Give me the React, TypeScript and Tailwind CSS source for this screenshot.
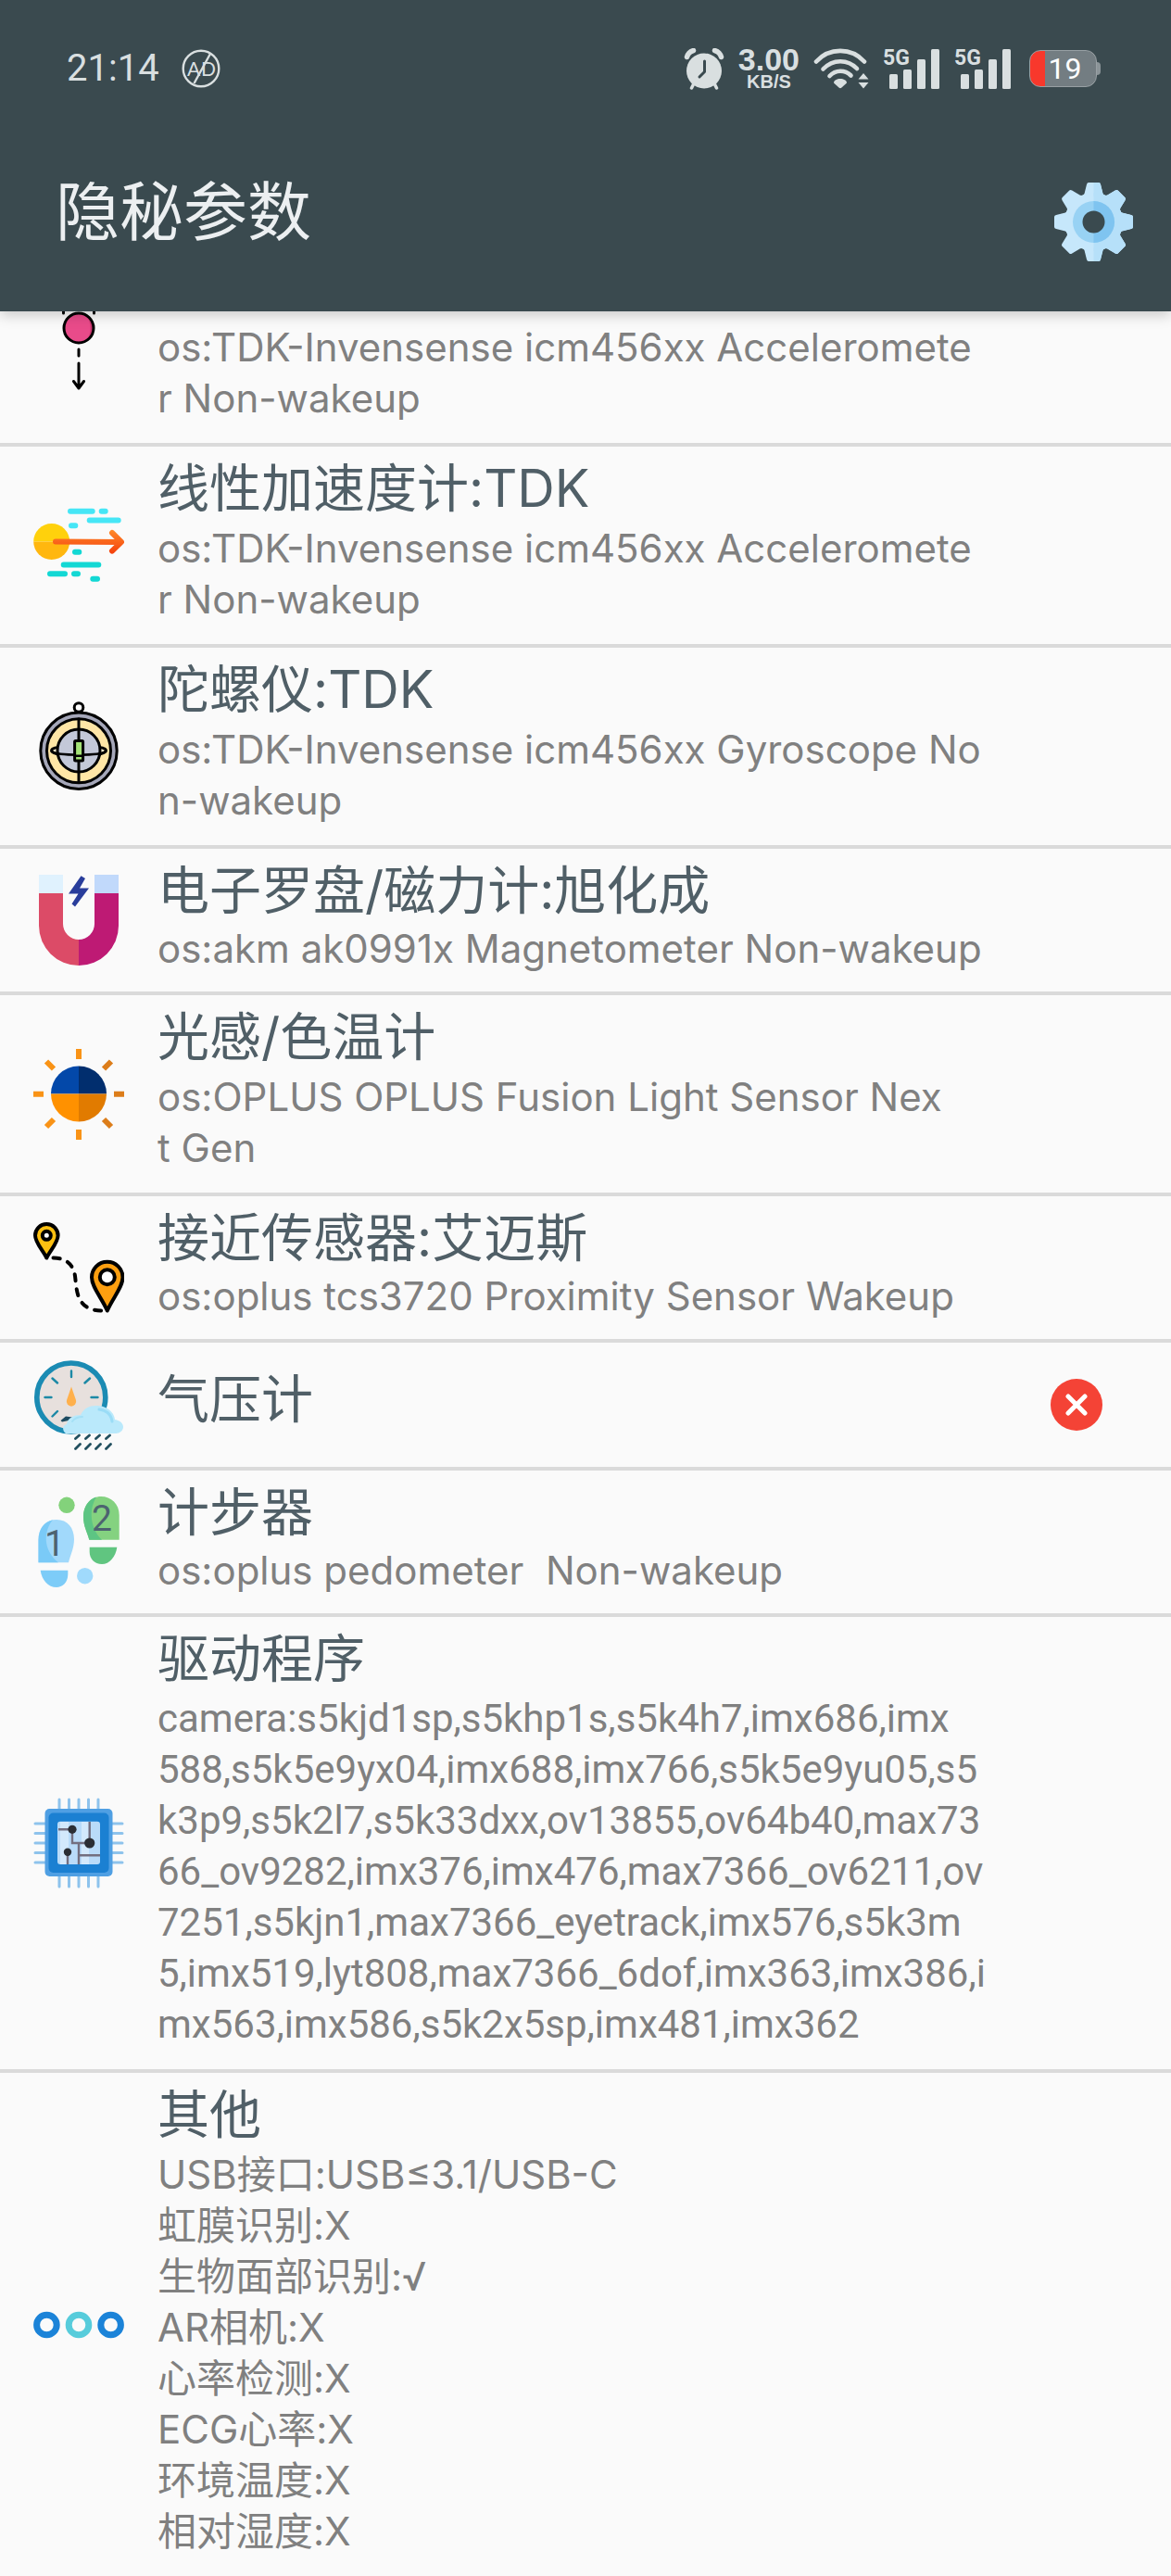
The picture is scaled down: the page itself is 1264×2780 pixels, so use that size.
import type { ReactNode } from "react";

function GravityIcon() {
  return (
    <>
      <path d="M32.5 4V15M65.5 4V15" stroke="#000" strokeWidth="3" strokeLinecap="round" />
      <circle cx="49" cy="31" r="16" fill="#e94b8a" />
      <path d="M57 17A16 16 0 0 1 57 45C63 37 63 25 57 17Z" fill="#cf3a73" />
      <circle cx="49" cy="31" r="16" fill="none" stroke="#000" strokeWidth="3" />
      <path
        d="M49 54V61M49 69V95M43.5 88.5L49 96L54.5 88.5"
        fill="none"
        stroke="#000"
        strokeWidth="3"
        strokeLinecap="round"
        strokeLinejoin="round"
      />
    </>
  );
}

function LinearIcon() {
  return (
    <>
      <defs>
        <linearGradient id="linear-arrow" x1="0" y1="32" x2="0" y2="58" gradientUnits="userSpaceOnUse">
          <stop offset="0" stopColor="#ff8a2a" />
          <stop offset="1" stopColor="#f43e0c" />
        </linearGradient>
      </defs>
      <path d="M0.2 44.5A19.5 19.5 0 0 1 39.2 44.5Z" fill="#ffd10c" />
      <path d="M0.2 44.5A19.5 19.5 0 0 0 39.2 44.5Z" fill="#ffb70f" />
      <path
        d="M40 11.8H63.7M73.7 11.8H77.7M60.7 21.5H91.7M41 27.2H45.3"
        stroke="#46e6f6"
        strokeWidth="6"
        strokeLinecap="round"
      />
      <path
        d="M45 55.8H49.3M32.7 69.5H70.3M18 79.2H34M44 79.2H48M64.3 84.8H69"
        stroke="#13d8d4"
        strokeWidth="6"
        strokeLinecap="round"
      />
      <path
        d="M24 44.6L94.5 45M85 35L95 44.8L85 54.6"
        fill="none"
        stroke="url(#linear-arrow)"
        strokeWidth="6"
        strokeLinecap="round"
        strokeLinejoin="round"
      />
    </>
  );
}

function GyroIcon() {
  return (
    <g stroke="#000" strokeWidth="3" strokeLinecap="round" strokeLinejoin="round">
      <circle cx="49" cy="6.5" r="4.8" fill="#fff" />
      <circle cx="49" cy="53.3" r="41.2" fill="#a5a7b9" />
      <circle cx="49" cy="53.3" r="34.5" fill="#ffe6a6" />
      <path d="M27 49.5C21 50 18.5 52 20 54C24 60 74 60 78 54C79.5 52 77 50 71 49.5" fill="#fff3d0" />
      <circle cx="49" cy="53" r="23" fill="#c3c8d8" />
      <path d="M49 19V87" />
      <path d="M20 54C26 58.8 72 58.8 78 54" fill="none" strokeWidth="2.6" />
      <rect x="44.6" y="42.5" width="9" height="21.5" rx="1" fill="#a4e377" />
      <path d="M44.6 58.8H53.6" strokeWidth="2.4" />
    </g>
  );
}

function MagnetIcon() {
  return (
    <>
      <path d="M6 20H32V53A17 17 0 0 0 49 70V98A43 43 0 0 1 6 55Z" fill="#dc4b67" />
      <path d="M92 20H66V53A17 17 0 0 1 49 70V98A43 43 0 0 0 92 55Z" fill="#be1a74" />
      <path d="M6 0H32V20H6Z" fill="#e0f2fe" />
      <path d="M66 0H92V20H66Z" fill="#c1d9fb" />
      <path d="M51.5 1.3L56 4L50 14.5H60L45 34.5L41.5 31.5L48.5 20.5H38Z" fill="#293d9b" />
    </>
  );
}

function LightIcon() {
  return (
    <>
      <path d="M49 18.5A30 30 0 0 0 19 48.5H49Z" fill="#0348a9" />
      <path d="M49 18.5A30 30 0 0 1 79 48.5H49Z" fill="#012e6e" />
      <path d="M49 78.5A30 30 0 0 1 19 48.5H49Z" fill="#ff9100" />
      <path d="M49 78.5A30 30 0 0 0 79 48.5H49Z" fill="#e17b00" />
      <path
        d="M49 0V11M49 87V98M0 48.7H11M14 13.5L22 21.5M14 84L22 76"
        stroke="#f99316"
        strokeWidth="6"
      />
      <path d="M87 48.7H98M84 13.5L76 21.5M84 84L76 76" stroke="#dc7d1a" strokeWidth="6" />
    </>
  );
}

function ProximityIcon() {
  return (
    <g stroke="#000" strokeLinejoin="round">
      <path
        d="M21.5 38.6C36 38.5 43 46 45 58C47 74 46 95 74 95.5"
        fill="none"
        strokeWidth="4"
        strokeLinecap="round"
        strokeDasharray="7 9"
      />
      <path d="M14.3 38.5C10 30 2 22 2 14.3A12.3 12.3 0 0 1 26.6 14.3C26.6 22 18.6 30 14.3 38.5Z" fill="#fdc011" strokeWidth="4" />
      <circle cx="14.3" cy="14.3" r="4.5" fill="#fff" strokeWidth="4" />
      <path d="M79.8 95.5C74 82 63 70 63 59.5A16.7 16.7 0 0 1 96.5 59.5C96.5 70 85.6 82 79.8 95.5Z" fill="#fd9f10" strokeWidth="4" />
      <circle cx="79.8" cy="59.3" r="8" fill="#fff" strokeWidth="4" />
    </g>
  );
}

function BarometerIcon() {
  return (
    <>
      <circle cx="40.8" cy="41" r="37" fill="#e7e0dd" stroke="#1b8bb3" strokeWidth="5.6" />
      <path
        d="M41 12.5V19M20.5 20.5L26 25.5M61 20.5L55.5 25.5M12.5 41H19.5M62.5 41H69.5M26 56L20.5 61.5"
        stroke="#1c89a6"
        strokeWidth="2.4"
        strokeLinecap="round"
      />
      <path d="M41 29.5L46 44A5.2 5.2 0 1 1 36 44Z" fill="#ffb04c" />
      <path d="M29.5 66L35 61.5L42 62.5L38 66L31 67.5Z" fill="#1e4b60" />
      <path
        d="M35 80C31 77 31 71 36 70C37 63 44 60 51 60C54 53 61 49.5 69 50C80 50.5 87 57 88 65C94 66 97 69.5 97 73C97 77 93 80 89 80Z"
        fill="#bae9fb"
      />
      <path d="M71 54C79 55 84 60 85 67" fill="none" stroke="#9adcf6" strokeWidth="3" strokeLinecap="round" />
      <path d="M42 67C45 63 49 62 53 62" fill="none" stroke="#a4e0f6" strokeWidth="2" strokeLinecap="round" />
      <path
        d="M49.5 82L45.5 85.5M60.5 82L56.5 85.5M71.5 82L67.5 85.5M82.5 82L78.5 85.5M50.5 91.5L45.5 96.5M61.5 91.5L56.5 96.5M72.5 91.5L67.5 96.5M83.5 91.5L78.5 96.5"
        stroke="#22505f"
        strokeWidth="2.8"
        strokeLinecap="round"
      />
    </>
  );
}

function StepsIcon() {
  return (
    <>
      <path d="M5.5 71.3V47C5.5 33 14 25 25 25C37 25 44 34 44 46C44 56 40 63 38 71.3Z" fill="#a1d9fb" />
      <path d="M5.5 71.3V47C5.5 35 12 27 21 25.3C11 37 10 58 27 71.3Z" fill="#7acaf7" />
      <path d="M7.7 79.7H37.3V84C37.3 93 31 98 25 98C16 98 9 90 7.7 79.7Z" fill="#7dccf8" />
      <circle cx="55.7" cy="85.7" r="8.7" fill="#a0dafc" />
      <path d="M92.7 46.7V20C92.7 8 84 0 73 0C62 0 54 9 54 22C54 32 58 38 60.3 46.7Z" fill="#84d280" />
      <path d="M60.3 46.7C58 38 54 32 54 22C54 11 60 3 68 0.6C59 15 62 36 74 46.7Z" fill="#5dc583" />
      <path d="M60.7 54.7H90.3C89 65 82 73 74 73C66 73 60.7 67 60.7 60Z" fill="#60c580" />
      <circle cx="36" cy="9.3" r="8.7" fill="#83d27b" />
      <g fill="#4d6370" fontFamily="Roboto, sans-serif" fontSize="39">
        <text x="12" y="64">1</text>
        <text x="63" y="37.3">2</text>
      </g>
    </>
  );
}

function ChipIcon() {
  return (
    <>
      <path
        d="M28 2V96M38.5 2V96M49 2V96M59.5 2V96M70 2V96M2 28H96M2 38.5H96M2 49H96M2 59.5H96M2 70H96"
        stroke="#8ec3ec"
        strokeWidth="3"
        strokeLinecap="round"
      />
      <rect x="12.5" y="12" width="73" height="73" rx="5" fill="#4f9fe3" />
      <rect x="16.5" y="16.5" width="65" height="64.5" rx="5" fill="#1b80d2" />
      <rect x="26" y="25.7" width="46" height="46.3" rx="3" fill="#b9dbf9" />
      <path d="M29 26H38V72H29ZM52 26H60V72H52Z" fill="#d3e9fc" />
      <path
        d="M27 34.3H42V49H60.7V26M37 58.7V72M49 49V72M49 62.3H72"
        fill="none"
        stroke="#736f80"
        strokeWidth="2.4"
      />
      <circle cx="42" cy="34.3" r="4.6" fill="#2b2e34" />
      <circle cx="60.7" cy="49" r="5.6" fill="#2b2e34" />
      <circle cx="37" cy="58.7" r="4.2" fill="#2b2e34" />
    </>
  );
}

function MoreIcon() {
  return (
    <g fill="none" strokeWidth="7">
      <circle cx="14.4" cy="49" r="10.8" stroke="#1b83d8" />
      <circle cx="49" cy="49" r="10.8" stroke="#57ccdb" />
      <circle cx="83.6" cy="49" r="10.8" stroke="#1b83d8" />
    </g>
  );
}

type Sensor = {
  icon: ReactNode;
  title: string;
  lines: string[];
  unsupported?: boolean;
  narrow?: boolean;
};

const sensors: Sensor[] = [
  {
    icon: <GravityIcon />,
    title: "",
    lines: ["os:TDK-Invensense icm456xx Acceleromete", "r Non-wakeup"],
  },
  {
    icon: <LinearIcon />,
    title: "线性加速度计:TDK",
    lines: ["os:TDK-Invensense icm456xx Acceleromete", "r Non-wakeup"],
  },
  {
    icon: <GyroIcon />,
    title: "陀螺仪:TDK",
    lines: ["os:TDK-Invensense icm456xx Gyroscope No", "n-wakeup"],
  },
  {
    icon: <MagnetIcon />,
    title: "电子罗盘/磁力计:旭化成",
    lines: ["os:akm ak0991x Magnetometer Non-wakeup"],
  },
  {
    icon: <LightIcon />,
    title: "光感/色温计",
    lines: ["os:OPLUS OPLUS Fusion Light Sensor Nex", "t Gen"],
  },
  {
    icon: <ProximityIcon />,
    title: "接近传感器:艾迈斯",
    lines: ["os:oplus tcs3720 Proximity Sensor Wakeup"],
  },
  { icon: <BarometerIcon />, title: "气压计", lines: [], unsupported: true },
  { icon: <StepsIcon />, title: "计步器", lines: ["os:oplus pedometer  Non-wakeup"] },
  {
    icon: <ChipIcon />,
    title: "驱动程序",
    narrow: true,
    lines: [
      "camera:s5kjd1sp,s5khp1s,s5k4h7,imx686,imx",
      "588,s5k5e9yx04,imx688,imx766,s5k5e9yu05,s5",
      "k3p9,s5k2l7,s5k33dxx,ov13855,ov64b40,max73",
      "66_ov9282,imx376,imx476,max7366_ov6211,ov",
      "7251,s5kjn1,max7366_eyetrack,imx576,s5k3m",
      "5,imx519,lyt808,max7366_6dof,imx363,imx386,i",
      "mx563,imx586,s5k2x5sp,imx481,imx362",
    ],
  },
  {
    icon: <MoreIcon />,
    title: "其他",
    lines: [
      "USB接口:USB≤3.1/USB-C",
      "虹膜识别:X",
      "生物面部识别:√",
      "AR相机:X",
      "心率检测:X",
      "ECG心率:X",
      "环境温度:X",
      "相对湿度:X",
    ],
  },
];

function AdBlockIcon() {
  return (
    <svg viewBox="0 0 42 42" className="size-[42px]" aria-hidden="true">
      <circle cx="21" cy="21" r="19.3" fill="none" stroke="#d9dfe0" strokeWidth="2.4" />
      <path d="M31 5L13.5 37" stroke="#d9dfe0" strokeWidth="2.4" />
      <g fill="#d9dfe0" fontFamily="Lato, sans-serif" fontSize="21">
        <text x="6" y="29">A</text>
        <text x="21" y="29">D</text>
      </g>
    </svg>
  );
}

function AlarmIcon() {
  return (
    <svg viewBox="0 0 44 45" className="h-[45px] w-[44px]" aria-hidden="true">
      <g fill="none" stroke="#d9dfe0" strokeLinecap="round">
        <path d="M3.5 9.5C4.5 6 7 3.5 10.5 2.5M40.5 9.5C39.5 6 37 3.5 33.5 2.5" strokeWidth="5.5" />
        <path d="M11 38L8.5 43M33 38L35.5 43" strokeWidth="3.5" />
      </g>
      <circle cx="22" cy="24.5" r="19" fill="#d9dfe0" />
      <path d="M22.5 14V25.5L17 31" fill="none" stroke="#3a4a4f" strokeWidth="3" strokeLinecap="round" strokeLinejoin="round" />
    </svg>
  );
}

function WifiIcon() {
  return (
    <svg viewBox="0 0 60 44" className="h-[44px] w-[60px]" aria-hidden="true">
      <g fill="none" stroke="#d9dfe0" strokeWidth="4.6" strokeLinecap="round">
        <path d="M3 14.5C17 -1 41 -1 55 14.5" />
        <path d="M10.5 22.5C21 11.5 37 11.5 47 22" />
        <path d="M17.5 30C24 23 34 23 40.5 29.5" />
      </g>
      <path d="M22 37.5C22 31.5 36 31.5 36 37.5L30.5 42.5Q29 43.8 27.5 42.5Z" fill="#d9dfe0" />
      <path d="M48.5 33.5L54 27L59.5 33.5ZM48.5 37L54 43.5L59.5 37Z" fill="#d9dfe0" />
    </svg>
  );
}

function SignalIcon() {
  return (
    <svg viewBox="0 0 62 44" className="h-[44px] w-[62px] overflow-visible" role="img" aria-label="5G">
      <g fill="#d9dfe0">
        <rect x="7" y="28" width="9" height="16" rx="1.5" />
        <rect x="22" y="23" width="9" height="21" rx="1.5" />
        <rect x="37" y="12" width="9" height="32" rx="1.5" />
        <rect x="52" y="1" width="9" height="43" rx="1.5" />
        <text x="0" y="18" fontFamily="Roboto, sans-serif" fontWeight="700" fontSize="23">
          5G
        </text>
      </g>
    </svg>
  );
}

function GearIcon() {
  const teeth = [0, 45, 90, 135, 180, 225, 270, 315];
  return (
    <svg viewBox="0 0 85 85" className="size-[85px]" aria-hidden="true">
      <defs>
        <clipPath id="gear-right">
          <path d="M42.5 0H85V85H42.5Z" />
        </clipPath>
        <g id="gear-body">
          <circle cx="42.5" cy="42.5" r="31.5" />
          {teeth.map((deg) => (
            <path key={deg} d="M37 0H48Q49.5 0 50 2L52.5 12L55 15H30L32.5 12L35 2Q35.5 0 37 0Z" transform={`rotate(${deg} 42.5 42.5)`} />
          ))}
        </g>
      </defs>
      <use href="#gear-body" fill="#c6e7fb" />
      <use href="#gear-body" fill="#b6e0f9" clipPath="url(#gear-right)" />
      <circle cx="42.5" cy="42.5" r="22.5" fill="#98d2f4" />
      <path d="M42.5 20A22.5 22.5 0 0 1 42.5 65Z" fill="#7fc4f0" />
      <circle cx="42.5" cy="42.5" r="12" fill="#3a4a4f" />
    </svg>
  );
}

function StatusBar() {
  return (
    <div className="flex h-[148px] items-center justify-between pr-[76px] pl-[72px] text-[#d9dfe0]">
      <div className="flex items-center gap-6">
        <span className="font-[Roboto,sans-serif] text-[40px] leading-none">21:14</span>
        <AdBlockIcon />
      </div>
      <div className="flex items-center gap-[15px]">
        <AlarmIcon />
        <div className="flex flex-col items-center font-['Liberation_Sans',sans-serif] font-bold">
          <span className="text-[34px] leading-[28px]">3.00</span>
          <span className="text-[20px] leading-[20px]">KB/S</span>
        </div>
        <WifiIcon />
        <SignalIcon />
        <SignalIcon />
        <div className="ml-1 flex items-center">
          <div className="flex h-10 w-[73px] items-center justify-center rounded-xl border border-[#98a0a4] bg-linear-to-r from-[#f8382c] from-22% to-[#737d82] to-22% pl-1 font-[Roboto,sans-serif] text-[32px] leading-none text-white">
            19
          </div>
          <div className="h-3.5 w-1 rounded-r bg-[#8b9498]" />
        </div>
      </div>
    </div>
  );
}

function SensorRow({ icon, title, lines, unsupported, narrow }: Sensor) {
  const leading = lines.length > 1 ? "leading-[55px]" : "leading-[51px]";
  const family = narrow ? "font-[Roboto,sans-serif]" : "";
  return (
    <li className="flex items-center border-[#dadada] pr-[74px] pl-9">
      <svg viewBox="0 0 98 98" className="my-[18px] size-[98px] shrink-0" aria-hidden="true">
        {icon}
      </svg>
      <div className="min-w-0 flex-1 pt-2.5 pb-[21px] pl-9">
        <h2 className="min-h-[72px] text-[56px] leading-[70px] text-[#505f67]">{title}</h2>
        {lines.length > 0 && (
          <p className={`text-[42px] whitespace-pre text-[#808080] ${leading} ${family}`}>{lines.join("\n")}</p>
        )}
      </div>
      {unsupported && (
        <svg viewBox="0 0 56 56" className="size-14 shrink-0" role="img" aria-label="X">
          <circle cx="28" cy="28" r="28" fill="#f44336" />
          <path d="M19 19L37 37M37 19L19 37" stroke="#fff" strokeWidth="5" strokeLinecap="round" />
        </svg>
      )}
    </li>
  );
}

export default function App() {
  return (
    <div className="min-h-screen overflow-x-hidden bg-[#fafafa] font-['Inter','Noto_Sans_CJK_SC',sans-serif]">
      <header className="relative z-10 bg-[#3a4a4f] shadow-[0_4px_14px_rgba(0,0,0,0.2)]">
        <StatusBar />
        <div className="flex h-[188px] items-center justify-between pr-[41px] pb-1.5 pl-[60px]">
          <h1 className="pb-5 text-[69px] leading-[80px] text-[#eceff1]">隐秘参数</h1>
          <button type="button" aria-label="设置">
            <GearIcon />
          </button>
        </div>
      </header>

      {/* the list is scrolled, its first row sits partly under the header */}
      <main className="-mt-[71px]">
        <ul className="divide-y-4">
          {sensors.map((sensor, i) => (
            <SensorRow key={i} {...sensor} />
          ))}
        </ul>
      </main>
    </div>
  );
}
